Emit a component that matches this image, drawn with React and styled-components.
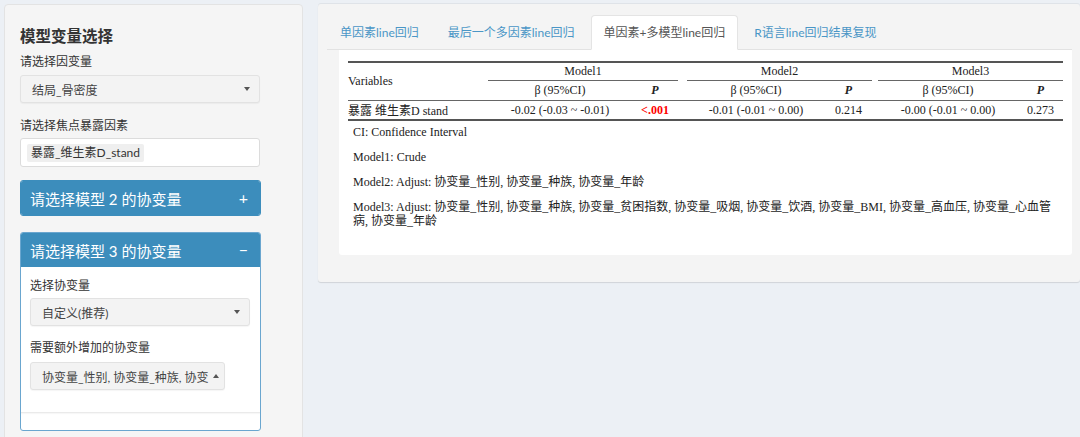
import styled, { createGlobalStyle, css } from 'styled-components'

const GlobalStyle = createGlobalStyle`
  body {
    margin: 0;
    background: #ecf0f5;
    font-family: Lato, "Noto Sans CJK SC", sans-serif;
    color: #333;
  }
`

const Page = styled.div`
  display: flex;
  align-items: flex-start;
  gap: 15px;
  padding: 4px 0 0 4px;
  height: 437px;
  box-sizing: border-box;
  overflow: hidden;
`

const Sidebar = styled.div`
  width: 299px;
  min-height: 460px;
  box-sizing: border-box;
  flex-shrink: 0;
  background: #f5f5f5;
  border: 1px solid #e3e3e3;
  border-radius: 4px;
  padding: 21px 15px;
`

const Title = styled.h4`
  margin: 0 0 8px;
  font-size: 15.5px;
  line-height: 20px;
  font-weight: bold;
  color: #333;
`

const Label = styled.div`
  font-size: 12px;
  line-height: 16px;
  color: #333;
  margin-bottom: ${p => p.mb || 5}px;
`

const Select = styled.div`
  display: flex;
  align-items: center;
  justify-content: space-between;
  box-sizing: border-box;
  width: ${p => p.w || 240}px;
  height: 28px;
  padding: 0 9px 0 11px;
  margin-bottom: ${p => p.mb || 0}px;
  background: #f3f3f3;
  border: 1px solid #e2e2e2;
  border-radius: 3px;
  box-shadow: 0 1px 1px rgba(0, 0, 0, 0.04);
  font-size: 12px;
  color: #444;
  white-space: nowrap;
  overflow: hidden;
`

const Caret = styled.span`
  width: 0;
  height: 0;
  flex-shrink: 0;
  margin-left: 4px;
  border-left: 3px solid transparent;
  border-right: 3px solid transparent;
  ${p => p.up
    ? css`border-bottom: 4px solid #555;`
    : css`border-top: 4px solid #555;`}
`

const ChipInput = styled.div`
  display: flex;
  align-items: center;
  box-sizing: border-box;
  width: 240px;
  height: 29px;
  padding: 0 6px;
  margin-bottom: 13px;
  background: #fff;
  border: 1px solid #dcdcdc;
  border-radius: 3px;
`

const Chip = styled.span`
  background: #efefef;
  border-radius: 2px;
  padding: 1px 4px;
  font-size: 12px;
  line-height: 16px;
  color: #333;
`

const Box = styled.div`
  width: 241px;
  box-sizing: border-box;
  border: 1px solid ${p => (p.open ? '#6aa6cf' : '#3c8dbc')};
  border-radius: 3px;
  background: #fff;
  margin-bottom: ${p => p.mb || 0}px;
  overflow: hidden;
`

const BoxHeader = styled.div`
  display: flex;
  align-items: center;
  justify-content: space-between;
  height: 34px;
  padding: 0 12px 0 9px;
  background: #3c8dbc;
  color: #fff;
  font-size: 15px;
`

const Sign = styled.span`
  font-size: 16px;
  line-height: 1;
`

const BoxBody = styled.div`
  padding: 11px 9px 22px;
  border-bottom: 1px solid #eaeaea;
  box-shadow: 0 1px 1px rgba(0, 0, 0, 0.03);
`

const BoxFooter = styled.div`
  height: 17px;
`

const Panel = styled.div`
  flex: 1;
  box-sizing: border-box;
  background: #f4f4f4;
  border-radius: 3px;
  box-shadow: 0 1px 1px rgba(0, 0, 0, 0.12), 0 -1px 0 #dfe3e8;
  padding: 11px 8px 27px 9px;
`

const Tabs = styled.ul`
  display: flex;
  list-style: none;
  margin: 0;
  padding: 0;
  border-bottom: 1px solid #e2e2e2;
`

const Tab = styled.li`
  box-sizing: border-box;
  height: 35px;
  line-height: 33px;
  padding: 0 12px;
  margin-right: 3px;
  margin-bottom: -1px;
  border: 1px solid transparent;
  border-radius: 4px 4px 0 0;
  font-size: 12px;
  color: #4a96c6;
  ${p => p.active && css`
    background: #fff;
    border-color: #e4e4e4 #e4e4e4 transparent;
    color: #555;
  `}
`

const Card = styled.div`
  margin-left: 12px;
  background: #fff;
  border-radius: 0 0 3px 3px;
  padding: 11px 9px 16px;
`

const Table = styled.table`
  width: 715px;
  table-layout: fixed;
  border-collapse: collapse;
  font-family: "Liberation Serif", "Noto Sans CJK SC", serif;
  font-size: 12px;
  color: #222;
  border-top: 2px solid #555;
  border-bottom: 2px solid #555;

  th, td {
    padding: 0;
    font-weight: normal;
    text-align: center;
    white-space: nowrap;
  }
`

const Spanner = styled.th`
  height: 17px;
  border-bottom: 1px solid #666;
`

const SubRow = styled.tr`
  th {
    height: 19px;
    border-bottom: 1px solid #666;
  }
`

const VarHead = styled.th`
  && { text-align: left; }
  border-bottom: 1px solid #666;
`

const PHead = styled.th`
  && { font-weight: bold; }
  font-style: italic;
`

const DataRow = styled.tr`
  td { height: 18px; }
`

const VarCell = styled.td`
  && { text-align: left; }
`

const Sig = styled.td`
  && { font-weight: bold; }
  color: #ff0000;
`

const Notes = styled.div`
  padding: 4px 0 0 5px;
  margin-right: 0;
  font-family: "Liberation Serif", "Noto Sans CJK SC", serif;
  font-size: 12px;
  line-height: 14px;
  color: #222;

  p { margin: 0 0 11px; }
`

const widths = [140, 144, 46, 9, 138, 47, 6, 140, 45]

function App() {
  return (
    <>
      <GlobalStyle />
      <Page>
        <Sidebar>
          <Title>模型变量选择</Title>
          <Label>请选择因变量</Label>
          <Select mb={15}>
            <span>结局_骨密度</span>
            <Caret />
          </Select>
          <Label mb={4}>请选择焦点暴露因素</Label>
          <ChipInput>
            <Chip>暴露_维生素D_stand</Chip>
          </ChipInput>
          <Box mb={16}>
            <BoxHeader>
              <span>请选择模型 2 的协变量</span>
              <Sign>+</Sign>
            </BoxHeader>
          </Box>
          <Box open>
            <BoxHeader>
              <span>请选择模型 3 的协变量</span>
              <Sign>−</Sign>
            </BoxHeader>
            <BoxBody>
              <Label mb={4}>选择协变量</Label>
              <Select w={220} mb={14}>
                <span>自定义(推荐)</span>
                <Caret />
              </Select>
              <Label mb={6}>需要额外增加的协变量</Label>
              <Select w={195}>
                <span>协变量_性别, 协变量_种族, 协变</span>
                <Caret up />
              </Select>
            </BoxBody>
            <BoxFooter />
          </Box>
        </Sidebar>

        <Panel>
          <Tabs>
            <Tab>单因素line回归</Tab>
            <Tab>最后一个多因素line回归</Tab>
            <Tab active>单因素+多模型line回归</Tab>
            <Tab>R语言line回归结果复现</Tab>
          </Tabs>
          <Card>
            <Table>
              <colgroup>
                {widths.map((w, i) => <col key={i} style={{ width: w }} />)}
              </colgroup>
              <thead>
                <tr>
                  <VarHead rowSpan={2}>Variables</VarHead>
                  <Spanner colSpan={2}>Model1</Spanner>
                  <th />
                  <Spanner colSpan={2}>Model2</Spanner>
                  <th />
                  <Spanner colSpan={2}>Model3</Spanner>
                </tr>
                <SubRow>
                  <th>β (95%CI)</th>
                  <PHead>P</PHead>
                  <th />
                  <th>β (95%CI)</th>
                  <PHead>P</PHead>
                  <th />
                  <th>β (95%CI)</th>
                  <PHead>P</PHead>
                </SubRow>
              </thead>
              <tbody>
                <DataRow>
                  <VarCell>暴露 维生素D stand</VarCell>
                  <td>-0.02 (-0.03 ~ -0.01)</td>
                  <Sig>&lt;.001</Sig>
                  <td />
                  <td>-0.01 (-0.01 ~ 0.00)</td>
                  <td>0.214</td>
                  <td />
                  <td>-0.00 (-0.01 ~ 0.00)</td>
                  <td>0.273</td>
                </DataRow>
              </tbody>
            </Table>
            <Notes>
              <p>CI: Confidence Interval</p>
              <p>Model1: Crude</p>
              <p>Model2: Adjust: 协变量_性别, 协变量_种族, 协变量_年龄</p>
              <p>Model3: Adjust: 协变量_性别, 协变量_种族, 协变量_贫困指数, 协变量_吸烟, 协变量_饮酒, 协变量_BMI, 协变量_高血压, 协变量_心血管病, 协变量_年龄</p>
            </Notes>
          </Card>
        </Panel>
      </Page>
    </>
  )
}

export default App
